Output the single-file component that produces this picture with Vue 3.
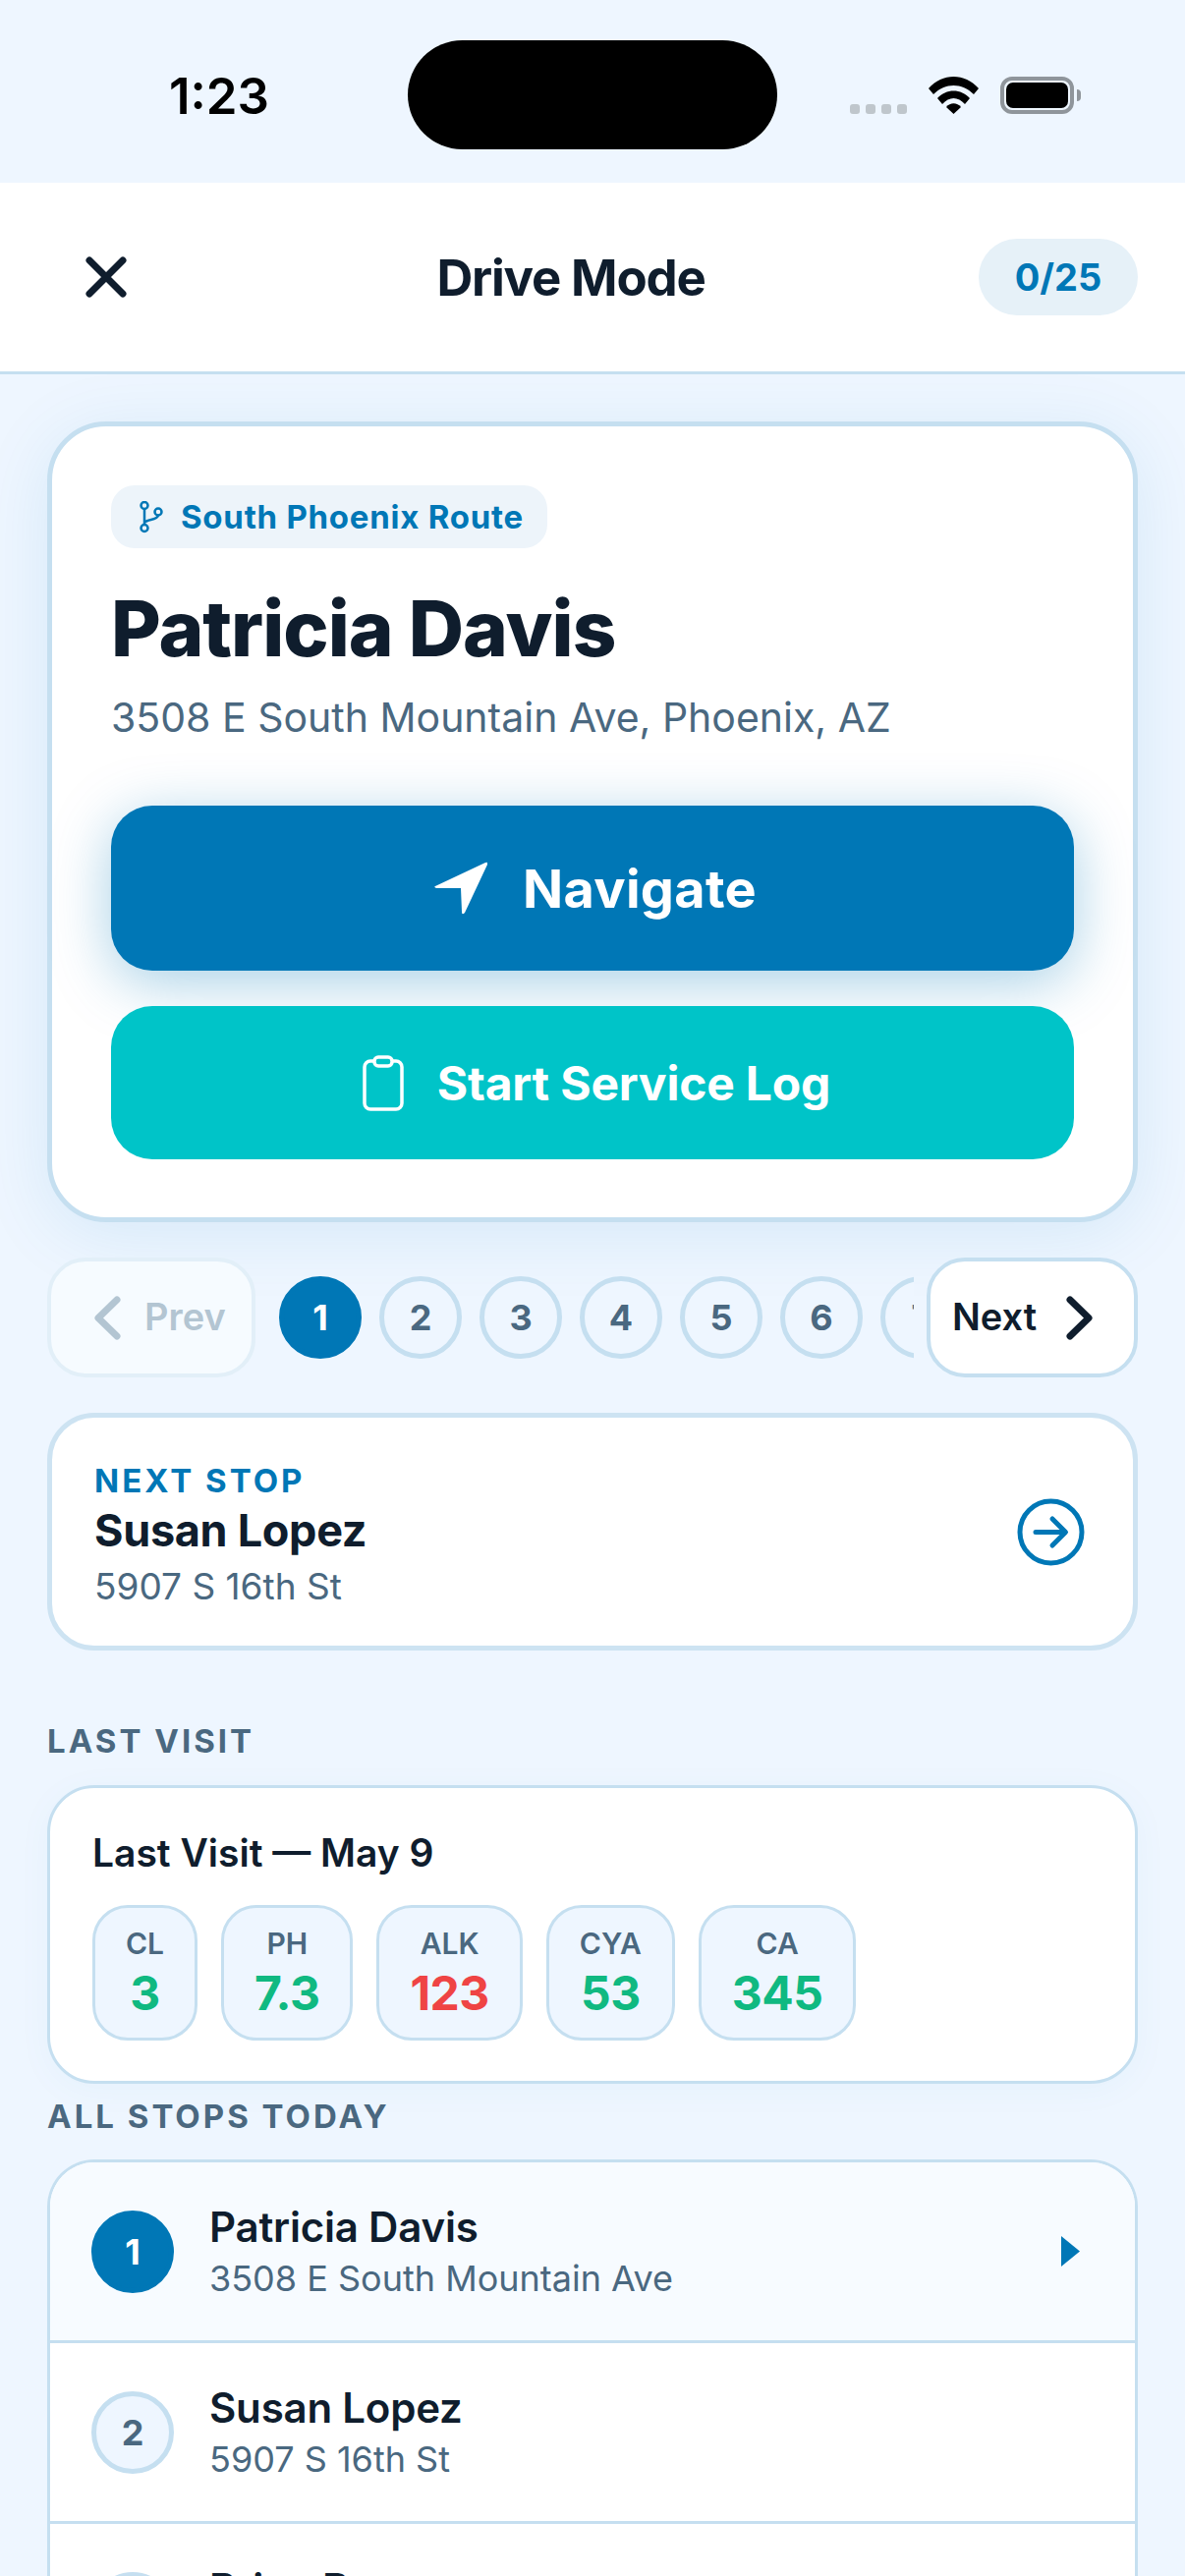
<script setup>
const pages = [1, 2, 3, 4, 5, 6, 7]
const tests = [
  { k: 'CL', v: '3', bad: false },
  { k: 'PH', v: '7.3', bad: false },
  { k: 'ALK', v: '123', bad: true },
  { k: 'CYA', v: '53', bad: false },
  { k: 'CA', v: '345', bad: false },
]
const stops = [
  { n: 1, name: 'Patricia Davis', addr: '3508 E South Mountain Ave', active: true },
  { n: 2, name: 'Susan Lopez', addr: '5907 S 16th St', active: false },
  { n: 3, name: 'Brian Ross', addr: '2210 E Baseline Rd', active: false },
]
</script>

<template>
  <div class="page">
    <header class="status">
      <span class="time">1:23</span>
      <div class="island"></div>
      <div class="sys">
        <div class="dots"><i></i><i></i><i></i><i></i></div>
        <svg class="wifi" width="51" height="38" viewBox="0 0 51 38">
          <path d="M0 12 C14 -4 37 -4 51 12 L46 18 C34 6 17 6 5 18 Z" fill="#000" />
          <path d="M9 22 C18 12 33 12 42 22 L37 28 C30 20 21 20 14 28 Z" fill="#000" />
          <path d="M18 31 C22 26 29 26 33 31 L25.500 38 Z" fill="#000" />
        </svg>
        <div class="battery"><div class="cell"></div></div>
        <div class="cap"></div>
      </div>
    </header>

    <nav class="nav">
      <svg width="42" height="42" viewBox="0 0 42 42" class="close">
        <path d="M4 4 L38 38 M38 4 L4 38" stroke="#0f1d2d" stroke-width="7" stroke-linecap="round" />
      </svg>
      <span class="nav-title">Drive Mode</span>
      <span class="count">0/25</span>
    </nav>

    <main class="content">
      <section class="hero">
        <div class="tag">
          <svg width="27" height="33" viewBox="0 0 27 33" fill="none" stroke="#0077b6" stroke-width="2.500">
            <circle cx="7" cy="4.500" r="3.500" />
            <circle cx="7" cy="27.500" r="3.500" />
            <circle cx="21" cy="11" r="3.500" />
            <path d="M7 8 V24 M7 22 C10 18 20 20 21 14.500" />
          </svg>
          <span>South Phoenix Route</span>
        </div>
        <h1 class="hero-name">Patricia Davis</h1>
        <p class="hero-addr">3508 E South Mountain Ave, Phoenix, AZ</p>
        <button class="cta navigate">
          <svg width="54" height="54" viewBox="0 0 54 54">
            <path d="M1 25 L52 1 Q55 0 54 3 L31 52 Q28 55 28 51 L27 27 L2 27 Q-1 26 1 25 Z" fill="#fff" />
          </svg>
          <span>Navigate</span>
        </button>
        <button class="cta start">
          <svg width="42" height="57" viewBox="0 0 42 57" fill="none" stroke="#fff" stroke-width="3.500">
            <rect x="2" y="6" width="38" height="49" rx="6" />
            <rect x="12" y="2" width="18" height="9" rx="4" fill="#00c4c8" />
          </svg>
          <span>Start Service Log</span>
        </button>
      </section>

      <div class="pager">
        <button class="page-btn prev">
          <svg width="27" height="45" viewBox="0 0 27 45" fill="none" stroke="#b3c5d2" stroke-width="7" stroke-linecap="round" stroke-linejoin="round">
            <path d="M23 4 L4 22.500 L23 41" />
          </svg>
          <span>Prev</span>
        </button>
        <div class="pages">
          <span v-for="p in pages" :key="p" class="num" :class="{ on: p === 1 }">{{ p }}</span>
        </div>
        <button class="page-btn next">
          <span>Next</span>
          <svg width="27" height="45" viewBox="0 0 27 45" fill="none" stroke="#0f1d2d" stroke-width="7" stroke-linecap="round" stroke-linejoin="round">
            <path d="M4 4 L23 22.500 L4 41" />
          </svg>
        </button>
      </div>

      <section class="next-stop">
        <div class="next-text">
          <div class="next-label">NEXT STOP</div>
          <div class="next-name">Susan Lopez</div>
          <div class="next-addr">5907 S 16th St</div>
        </div>
        <svg width="69" height="69" viewBox="0 0 69 69" fill="none" stroke="#0077b6" stroke-width="5" stroke-linecap="round" stroke-linejoin="round">
          <circle cx="34.500" cy="34.500" r="31.500" />
          <path d="M19 34.500 H49 M36 21 L49.500 34.500 L36 48" />
        </svg>
      </section>

      <h2 class="section-label first">LAST VISIT</h2>
      <section class="visit">
        <div class="visit-title">Last Visit — May 9</div>
        <div class="chips">
          <div v-for="t in tests" :key="t.k" class="chip">
            <span class="chip-k">{{ t.k }}</span>
            <span class="chip-v" :class="{ bad: t.bad }">{{ t.v }}</span>
          </div>
        </div>
      </section>

      <h2 class="section-label stops-label">ALL STOPS TODAY</h2>
      <section class="list">
        <div v-for="s in stops" :key="s.n" class="row" :class="{ active: s.active }">
          <span class="num row-num" :class="{ on: s.active }">{{ s.n }}</span>
          <div class="row-text">
            <div class="row-name">{{ s.name }}</div>
            <div class="row-addr">{{ s.addr }}</div>
          </div>
          <svg v-if="s.active" width="20" height="31" viewBox="0 0 20 31"><path d="M1 0 L20 15.500 L1 31 Z" fill="#0077b6" /></svg>
        </div>
      </section>
    </main>
  </div>
</template>

<style>
html, body { margin: 0; background: #eef6ff; }
</style>

<style scoped>
* { box-sizing: border-box; }
.page {
  width: 1206px; height: 2622px; overflow: hidden; background: #eef6ff;
  font-family: Inter, "Liberation Sans", sans-serif; color: #0f1d2d;
}
.status { height: 186px; position: relative; display: flex; justify-content: space-between; padding: 0 106px 0 172px; }
.time { font-size: 51px; font-weight: 600; line-height: 62px; margin-top: 67px; color: #000; }
.island { position: absolute; left: 415px; top: 41px; width: 376px; height: 111px; border-radius: 56px; background: #000; }
.sys { display: flex; align-items: flex-start; margin-top: 78px; }
.dots { display: flex; gap: 6px; margin-top: 28px; margin-right: 22px; }
.dots i { width: 10px; height: 10px; border-radius: 3px; background: #bfc6cc; }
.wifi { margin-right: 22px; }
.battery { width: 75px; height: 38px; border: 4px solid #8f959b; border-radius: 12px; padding: 2px; }
.cell { width: 100%; height: 100%; background: #000; border-radius: 7px; }
.cap { width: 4px; height: 12px; background: #8f959b; border-radius: 0 4px 4px 0; margin: 13px 0 0 3px; }

.nav {
  height: 195px; background: #fff; border-bottom: 3px solid #c5dff0; position: relative;
  display: flex; align-items: center; justify-content: space-between; padding: 0 48px 0 87px;
}
.nav-title { position: absolute; left: 0; width: 1162px; text-align: center; font-size: 51px; font-weight: 700; pointer-events: none; letter-spacing: -1.2px; }
.count { height: 78px; width: 162px; border-radius: 39px; background: #e6f1f8; color: #0077b6; font-size: 38px; font-weight: 700; display: flex; align-items: center; justify-content: center; }

.content { padding: 48px 48px 0; }
.hero {
  border: 5px solid #c5dff0; border-radius: 60px; background: #fff; padding: 60px 60px 59px;
  box-shadow: 0 12px 72px rgba(0, 119, 182, 0.1);
}
.tag { display: inline-flex; align-items: center; gap: 17px; height: 64px; padding: 0 24px 0 27px; background: #edf4fa; border-radius: 24px; color: #0077b6; font-size: 33px; font-weight: 700; letter-spacing: 0.75px; }
.hero-name { margin: 37px 0 0; font-size: 78px; line-height: 90px; font-weight: 800; letter-spacing: -1px; }
.hero-addr { margin: 19px 0 0; font-size: 41px; line-height: 52px; color: #4a6880; }
.cta { width: 100%; border: 0; border-radius: 42px; color: #fff; display: flex; align-items: center; justify-content: center; font-family: inherit; }
.navigate { height: 168px; margin-top: 64px; background: #0077b6; font-size: 54px; font-weight: 700; gap: 36px; padding: 0 0 0 6px; letter-spacing: 0.3px; box-shadow: 0 12px 60px rgba(0, 119, 182, 0.35); }
.start { height: 156px; margin-top: 36px; background: #00c4c8; font-size: 48px; font-weight: 700; gap: 34px; padding: 0 0 0 8px; letter-spacing: -0.2px; }

.pager { display: flex; align-items: center; margin-top: 36px; height: 122px; }
.page-btn { height: 122px; border-radius: 39px; border: 4px solid #c5dff0; font-family: inherit; font-size: 38px; font-weight: 600; display: flex; align-items: center; justify-content: center; flex: none; }
.page-btn span { margin-top: -2px; }
.prev { width: 212px; background: #f6fbff; color: #b3c5d2; border-color: #e2eff8; gap: 24px; padding: 0 0 0 18px; }
.next { width: 215px; background: #fff; color: #0f1d2d; gap: 30px; padding: 0 20px 0 0; }
.pages { display: flex; gap: 18px; width: 646px; margin: 0 13px 0 24px; overflow: hidden; flex: none; }
.num { width: 84px; height: 84px; flex: none; border-radius: 50%; border: 5px solid #c5dff0; background: #eef6ff; color: #4a6880; display: flex; align-items: center; justify-content: center; font-size: 36px; font-weight: 700; }
.num.on { background: #0077b6; border-color: #0077b6; color: #fff; }

.next-stop {
  margin-top: 36px; height: 242px; background: #fff; border: 5px solid #cde3f2; border-radius: 48px;
  display: flex; align-items: center; justify-content: space-between; padding: 6px 49px 0 43px;
}
.next-stop svg { margin-top: -6px; }
.next-label { font-size: 33px; line-height: 40px; font-weight: 700; letter-spacing: 3px; color: #0077b6; }
.next-name { font-size: 45px; line-height: 56px; font-weight: 700; margin-top: 3px; letter-spacing: -0.3px; }
.next-addr { font-size: 37px; line-height: 46px; color: #4a6880; margin-top: 6px; }

.section-label { margin: 0; font-size: 33px; line-height: 40px; font-weight: 700; letter-spacing: 3px; color: #4a6880; }
.first { margin-top: 72px; }
.visit {
  margin-top: 25px; height: 304px; background: #fff; border: 3px solid #c5dff0; border-radius: 48px; padding: 42px 43px 0;
  box-shadow: 0 6px 36px rgba(0, 119, 182, 0.04);
}
.visit-title { font-size: 39px; line-height: 48px; font-weight: 600; }
.chips { display: flex; gap: 24px; margin-top: 29px; }
.chip { height: 138px; border: 3px solid #c5dff0; border-radius: 36px; background: #eef6ff; padding: 0 31px; display: flex; flex-direction: column; align-items: center; justify-content: center; }
.chip-k { font-size: 30px; line-height: 38px; font-weight: 600; color: #4a6880; }
.chip-v { font-size: 48px; line-height: 56px; font-weight: 700; color: #10b981; margin-top: 4px; letter-spacing: -0.5px; }
.chip-v.bad { color: #ef4444; }

.stops-label { margin-top: 13px; }
.list { margin-top: 24px; background: #fff; border: 3px solid #c5dff0; border-bottom: 0; border-radius: 48px 48px 0 0; overflow: hidden; }
.row { height: 184px; display: flex; align-items: center; padding: 0 56px 0 42px; border-bottom: 3px solid #c5dff0; }
.row.active { background: #f7fbff; }
.row-num { margin-right: 36px; }
.row-text { flex: 1; }
.row-name { font-size: 42px; line-height: 52px; font-weight: 600; letter-spacing: -0.2px; }
.row-addr { font-size: 36px; line-height: 46px; color: #4a6880; margin-top: 3px; }
</style>
